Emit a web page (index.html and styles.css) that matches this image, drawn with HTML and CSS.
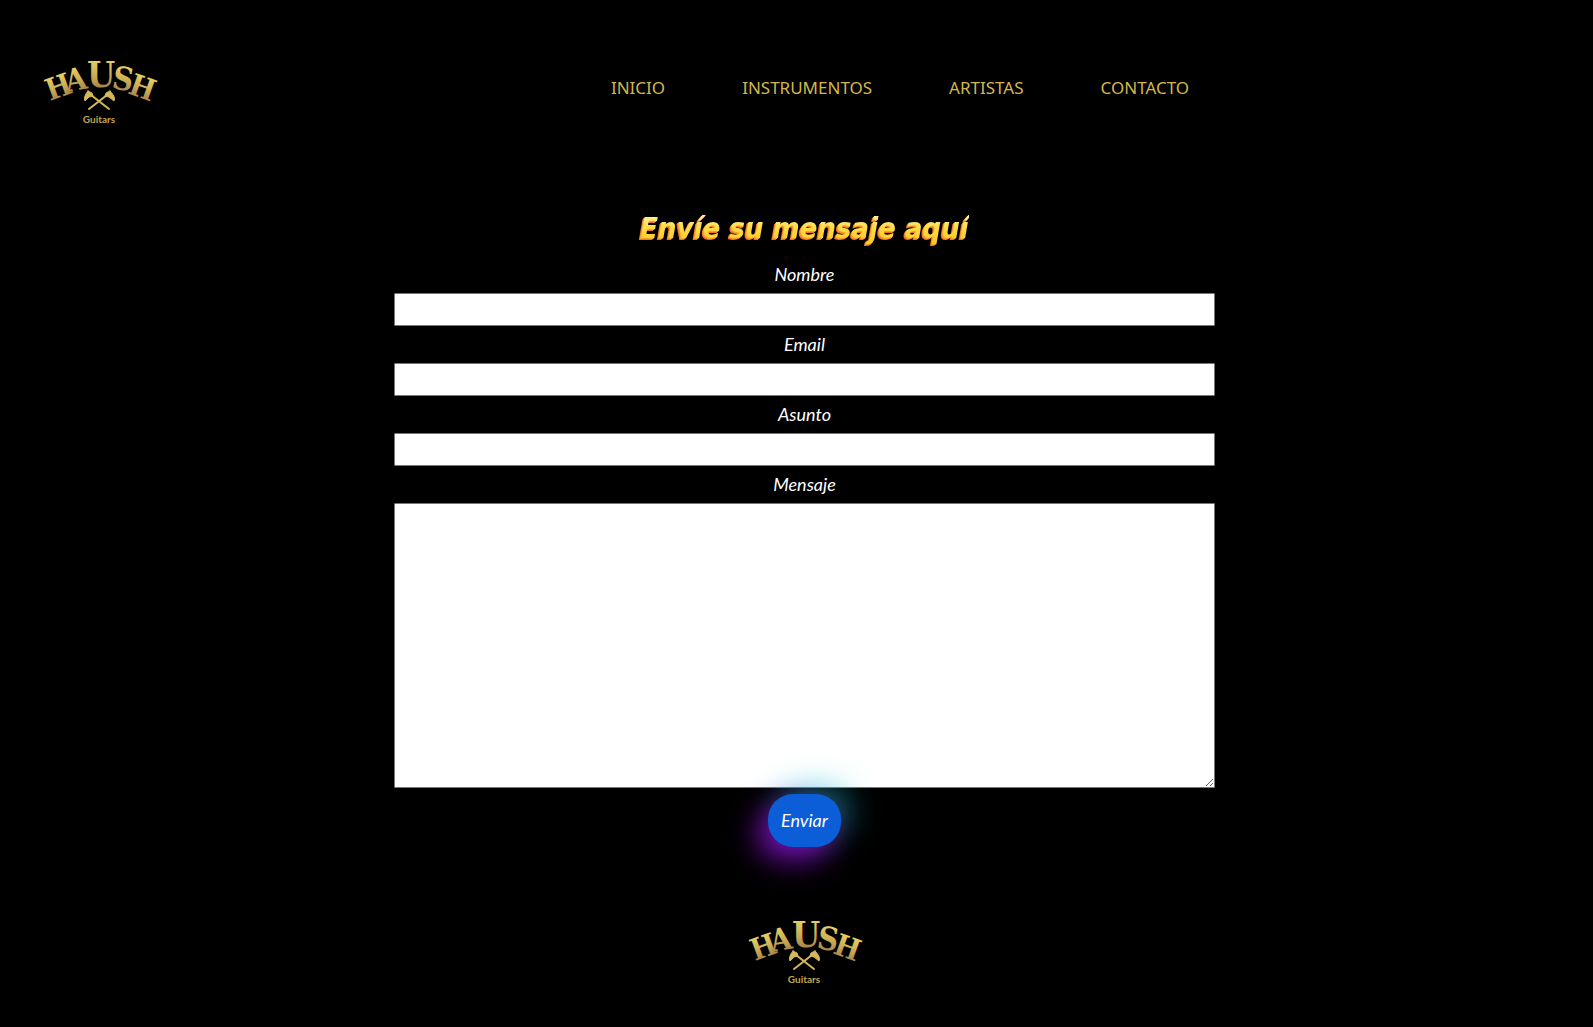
FILE: index.html
```html
<!DOCTYPE html>
<html lang="es">
<head>
<meta charset="utf-8">
<meta name="viewport" content="width=device-width, initial-scale=1">
<title>Haush Guitars - Contacto</title>
<link rel="stylesheet" href="styles.css">
</head>
<body>
<svg class="defs" width="0" height="0" aria-hidden="true">
  <defs>
    <linearGradient id="gold" x1="0" y1="0" x2="0" y2="1">
      <stop offset="0.1" stop-color="#ecd768"/>
      <stop offset="0.5" stop-color="#cdb055"/>
      <stop offset="0.9" stop-color="#a07a4c"/>
    </linearGradient>
    <symbol id="haush" viewBox="0 0 140 100">
      <g class="logo-name" fill="url(#gold)">
        <text x="20" y="61" font-size="30" transform="rotate(-20 20 61)">H</text>
        <text x="37" y="52" font-size="31" transform="rotate(-10 37 52)">A</text>
        <text x="57" y="47" font-size="36">U</text>
        <text x="81" y="48" font-size="32" transform="rotate(10 81 48)">S</text>
        <text x="97" y="53" font-size="30" transform="rotate(20 97 53)">H</text>
      </g>
      <g fill="none" stroke="#d3b958" stroke-width="2" stroke-linecap="round">
        <path d="M61 55L79 69M77 55L59 69"/>
        <path d="M58 51L62 53L63 56L59 57L55 61Q53 57 58 51ZM80 51L76 53L75 56L79 57L84 61Q86 57 80 51Z" fill="#d3b958" stroke-width="1"/>
      </g>
      <text class="logo-sub" x="69" y="83" text-anchor="middle" fill="#c3a653">Guitars</text>
    </symbol>
  </defs>
</svg>
<header class="header">
  <a class="logo" href="#" aria-label="Haush Guitars"><svg><use href="#haush"/></svg></a>
  <nav class="nav">
    <a href="#">INICIO</a>
    <a href="#">INSTRUMENTOS</a>
    <a href="#">ARTISTAS</a>
    <a href="#">CONTACTO</a>
  </nav>
</header>
<main class="main">
  <h1 class="title">Envíe su mensaje aquí</h1>
  <form class="form">
    <label for="nombre">Nombre</label>
    <input id="nombre" type="text">
    <label for="email">Email</label>
    <input id="email" type="email">
    <label for="asunto">Asunto</label>
    <input id="asunto" type="text">
    <label for="mensaje">Mensaje</label>
    <textarea id="mensaje"></textarea>
    <button type="submit">Enviar</button>
  </form>
</main>
<footer class="footer">
  <a class="logo" href="#" aria-label="Haush Guitars"><svg><use href="#haush"/></svg></a>
</footer>
</body>
</html>
```
FILE: styles.css
```css
* { box-sizing: border-box; }
body {
  margin: 0;
  background: #000;
  color: #fff;
  font-family: "Noto Sans", sans-serif;
}
.defs { position: absolute; }
.logo { display: block; width: 140px; }
.logo svg { display: block; width: 140px; height: 100px; }
.logo-name {
  font-family: "DejaVu Serif Condensed", "DejaVu Serif", serif;
  font-weight: 700;
}
.logo-sub {
  font-family: Lato, sans-serif;
  font-size: 10px;
  font-weight: 700;
}
.header {
  display: grid;
  grid-template-columns: 208px 1fr;
  align-items: center;
  padding: 40px 0 40px 30px;
}
.nav {
  display: flex;
  justify-content: center;
  gap: 77px;
  padding: 0 31px 4px 0;
}
.nav a {
  color: #d3b84e;
  font-size: 17px;
  line-height: 24px;
  text-decoration: none;
}
.main {
  display: flex;
  flex-direction: column;
  align-items: center;
  padding: 20px 0 0 16px;
}
.title {
  margin: 0;
  font-family: "DejaVu Sans Condensed", "DejaVu Sans", sans-serif;
  font-size: 29px;
  font-weight: 700;
  font-style: italic;
  line-height: 56px;
  color: transparent;
  background: linear-gradient(#fff3a0 25%, #ffdc45 50%, #ffc91c 80%);
  background-clip: text;
  filter: drop-shadow(-1px 1px 0 #f9a02c) drop-shadow(-1px 1px 0 #f0702c);
}
.form {
  display: flex;
  flex-direction: column;
  align-items: center;
  width: 52%;
}
.form label, .form button {
  font-family: Lato, sans-serif;
  font-size: 18px;
  font-style: italic;
}
.form label { line-height: 37px; }
.form input, .form textarea {
  display: block;
  width: 100%;
  margin: 0;
  background: #fff;
  border: 1px solid #767676;
  border-radius: 1px;
}
.form input { height: 33px; }
.form textarea { height: 285px; }
.form button {
  margin-top: 6px;
  padding: 9px 13px;
  border: 0;
  border-radius: 25px;
  background: #0b5ed7;
  color: #fff;
  line-height: 35px;
  box-shadow: -10px 12px 30px #9210dfcc, 10px -10px 30px #20c5d870;
}
.footer {
  display: flex;
  justify-content: center;
  padding: 53px 0 27px 16px;
}
```
